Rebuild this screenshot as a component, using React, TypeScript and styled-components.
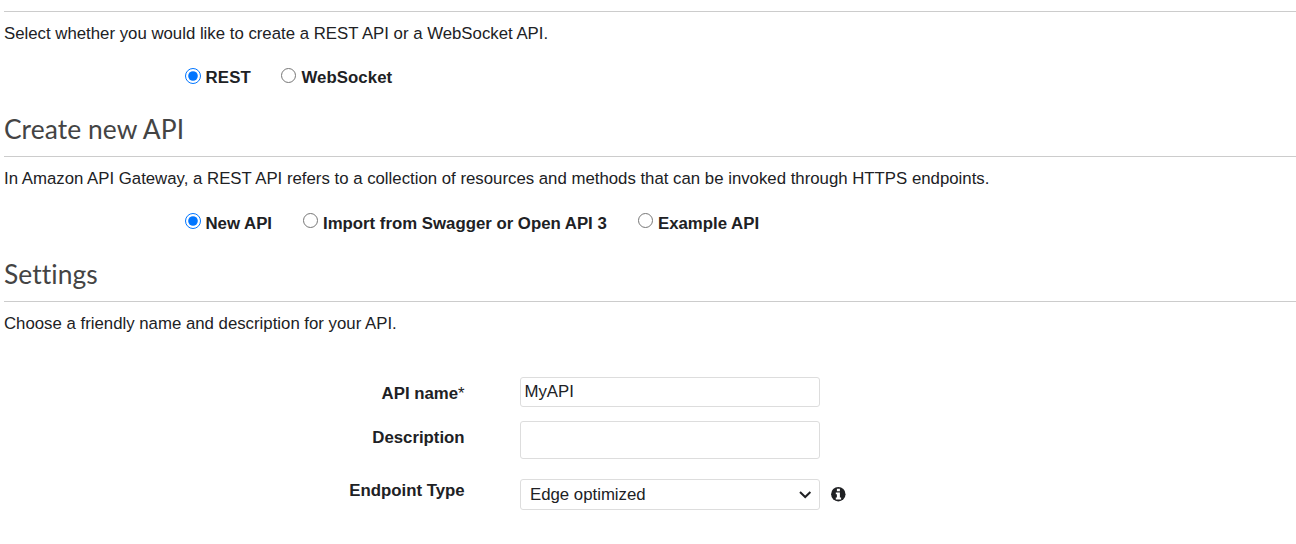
import React from "react";
import styled, { createGlobalStyle } from "styled-components";

const Global = createGlobalStyle`
  * { box-sizing: border-box; }
  body { margin: 0; background: #fff; color: #202124; font: 16.8px/20px "Liberation Sans", Arial, sans-serif; overflow: hidden; }
`;
const Page = styled.main`height: 544px; padding-left: 4px; padding-top: 11px; overflow: hidden;`;
const Section = styled.section<{ $h: number }>`height: ${p => p.$h}px;`;
const Title = styled.h2`
  margin: 0; height: 41px; font: 400 26.4px/28px Lato, sans-serif; color: #444; letter-spacing: 0.06px; font-variant-ligatures: none;
`;
const Intro = styled.p`margin: 0; border-top: 1px solid #ccc; padding-top: 12px; height: 33px; white-space: nowrap;`;
const Options = styled.div<{ $drop: number }>`
  display: flex; padding: 23px 0 0 181px;
  span { padding-top: ${p => p.$drop}px; }
`;
const Option = styled.label<{ $w: number; $ls?: number }>`
  display: flex; align-items: flex-start; width: ${p => p.$w}px; font-weight: 700; white-space: nowrap; letter-spacing: ${p => p.$ls ?? 0}px;
`;
const Radio = styled.input`
  width: 15px; height: 15px; margin: 1px 5.5px 0 0; flex: none;
  &:checked { width: 16px; height: 16px; margin-right: 4.5px; }
`;
const Form = styled.form`display: flex; flex-direction: column; padding-top: 43px;`;
const Row = styled.div<{ $h: number }>`display: flex; height: ${p => p.$h}px;`;
const Label = styled.label<{ $top: number }>`
  width: 460.6px; margin-right: 55.4px; padding-top: ${p => p.$top}px; text-align: right; font-weight: 700; white-space: nowrap;
  span { font-weight: 400; }
`;
const Input = styled.input<{ $h: number }>`
  width: 300px; height: ${p => p.$h}px; border: 1px solid #ddd; border-radius: 3px; padding: 0 4px 1px 3.5px; outline: 0; color: #202124; background: #fff;
  font: 16.8px "Liberation Sans", Arial, sans-serif;
`;
const Select = styled.div`
  display: flex; align-items: center; justify-content: space-between; width: 300px; height: 31px; border: 1px solid #ddd; border-radius: 3px; padding: 0 7px 0 9px;
`;
const Info = styled.svg`margin: 8px 0 0 11px;`;

export default function App() {
  return (
    <Page>
      <Global />
      <Section $h={104}>
        <Intro>Select whether you would like to create a REST API or a WebSocket API.</Intro>
        <Options $drop={1}>
          <Option $w={96} $ls={0.2}><Radio type="radio" name="protocol" defaultChecked /><span>REST</span></Option>
          <Option $w={120} $ls={0.06}><Radio type="radio" name="protocol" /><span>WebSocket</span></Option>
        </Options>
      </Section>
      <Section $h={145}>
        <Title>Create new API</Title>
        <Intro>In Amazon API Gateway, a REST API refers to a collection of resources and methods that can be invoked through HTTPS endpoints.</Intro>
        <Options $drop={2}>
          <Option $w={117.5}><Radio type="radio" name="source" defaultChecked /><span>New API</span></Option>
          <Option $w={335}><Radio type="radio" name="source" /><span>Import from Swagger or Open API 3</span></Option>
          <Option $w={130}><Radio type="radio" name="source" /><span>Example API</span></Option>
        </Options>
      </Section>
      <Section $h={284}>
        <Title>Settings</Title>
        <Intro>Choose a friendly name and description for your API.</Intro>
        <Form>
          <Row $h={44}><Label $top={7}>API name<span>*</span></Label><Input $h={30} defaultValue="MyAPI" /></Row>
          <Row $h={58}><Label $top={7}>Description</Label><Input $h={38} /></Row>
          <Row $h={31}>
            <Label $top={2}>Endpoint Type</Label>
            <Select>Edge optimized<svg width="14" height="9" viewBox="0 0 14 9"><path d="M2 2 7.2 7 12.4 2" fill="none" stroke="#202124" strokeWidth="2" /></svg></Select>
            <Info width="15" height="15" viewBox="0 0 15 15"><circle cx="7.3" cy="7.2" r="7.2" fill="#202124" /><path d="M5.9 1.8h3v2.4h-3zM4.8 5.4h4.1v5.1h1.2v1.9H4.8v-1.9h1.1V7.2H4.8z" fill="#fff" /></Info>
          </Row>
        </Form>
      </Section>
    </Page>
  );
}
